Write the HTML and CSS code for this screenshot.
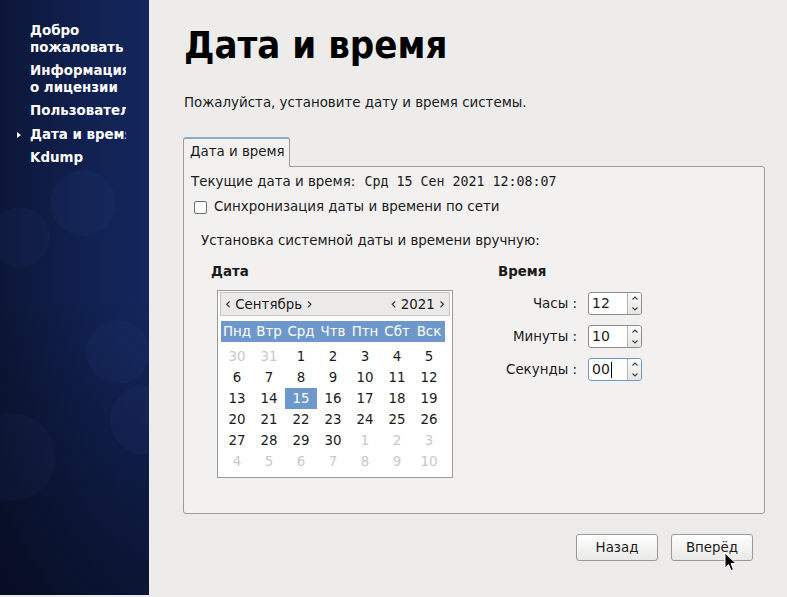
FILE: index.html
```html
<!DOCTYPE html>
<html lang="ru">
<head>
<meta charset="utf-8">
<title>Дата и время</title>
<link rel="stylesheet" href="styles.css">
</head>
<body>
<aside class="sidebar">
  <ul class="steps">
    <li>Добро<br>пожаловать</li>
    <li>Информация<br>о лицензии</li>
    <li>Пользователь</li>
    <li class="current"><span class="clip">Дата и время</span></li>
    <li>Kdump</li>
  </ul>
</aside>
<main class="main">
  <h1 class="title">Дата и время</h1>
  <p class="intro">Пожалуйста, установите дату и время системы.</p>
  <div class="tabs">
    <div class="tab">Дата и время</div>
  </div>
  <section class="frame">
    <div class="current-time">Текущие дата и время: <span class="mono">Срд 15 Сен 2021 12:08:07</span></div>
    <label class="sync"><span class="checkbox"></span>Синхронизация даты и времени по сети</label>
    <div class="manual">Установка системной даты и времени вручную:</div>
    <div class="columns">
      <div class="date-col">
        <div class="col-head">Дата</div>
        <div class="calendar">
          <div class="cal-head">
            <span class="nav"><span class="arr">‹</span> Сентябрь <span class="arr">›</span></span>
            <span class="nav"><span class="arr">‹</span> 2021 <span class="arr">›</span></span>
          </div>
          <div class="cal-grid">
            <div class="dn">Пнд</div><div class="dn">Втр</div><div class="dn">Срд</div><div class="dn">Чтв</div><div class="dn">Птн</div><div class="dn">Сбт</div><div class="dn">Вск</div>
            <div class="d off">30</div><div class="d off">31</div><div class="d">1</div><div class="d">2</div><div class="d">3</div><div class="d">4</div><div class="d">5</div>
            <div class="d">6</div><div class="d">7</div><div class="d">8</div><div class="d">9</div><div class="d">10</div><div class="d">11</div><div class="d">12</div>
            <div class="d">13</div><div class="d">14</div><div class="d sel">15</div><div class="d">16</div><div class="d">17</div><div class="d">18</div><div class="d">19</div>
            <div class="d">20</div><div class="d">21</div><div class="d">22</div><div class="d">23</div><div class="d">24</div><div class="d">25</div><div class="d">26</div>
            <div class="d">27</div><div class="d">28</div><div class="d">29</div><div class="d">30</div><div class="d off">1</div><div class="d off">2</div><div class="d off">3</div>
            <div class="d off">4</div><div class="d off">5</div><div class="d off">6</div><div class="d off">7</div><div class="d off">8</div><div class="d off">9</div><div class="d off">10</div>
          </div>
        </div>
      </div>
      <div class="time-col">
        <div class="col-head">Время</div>
        <div class="time-grid">
          <span class="tlabel">Часы :</span>
          <div class="spin"><span class="field">12</span><span class="btns"><svg viewBox="0 0 12 10" width="12" height="10"><path d="M3.5 6.5 L6 4 L8.5 6.5" fill="none" stroke="#444" stroke-width="1.2"/></svg><svg viewBox="0 0 12 10" width="12" height="10"><path d="M3.5 3.5 L6 6 L8.5 3.5" fill="none" stroke="#444" stroke-width="1.2"/></svg></span></div>
          <span class="tlabel">Минуты :</span>
          <div class="spin"><span class="field">10</span><span class="btns"><svg viewBox="0 0 12 10" width="12" height="10"><path d="M3.5 6.5 L6 4 L8.5 6.5" fill="none" stroke="#444" stroke-width="1.2"/></svg><svg viewBox="0 0 12 10" width="12" height="10"><path d="M3.5 3.5 L6 6 L8.5 3.5" fill="none" stroke="#444" stroke-width="1.2"/></svg></span></div>
          <span class="tlabel">Секунды :</span>
          <div class="spin focus"><span class="field">00<span class="caret"></span></span><span class="btns"><svg viewBox="0 0 12 10" width="12" height="10"><path d="M3.5 6.5 L6 4 L8.5 6.5" fill="none" stroke="#444" stroke-width="1.2"/></svg><svg viewBox="0 0 12 10" width="12" height="10"><path d="M3.5 3.5 L6 6 L8.5 3.5" fill="none" stroke="#444" stroke-width="1.2"/></svg></span></div>
        </div>
      </div>
    </div>
  </section>
  <div class="actions">
    <button class="btn">Назад</button>
    <button class="btn">Вперёд</button>
  </div>
  <svg class="cursor" width="13" height="20" viewBox="0 0 13 20"><path d="M1 1 L1 16 L4.5 12.5 L7 18.5 L9.5 17.5 L7 11.5 L12 11.5 Z" fill="#000" stroke="#fff" stroke-width="1"/></svg>
</main>
</body>
</html>
```

FILE: styles.css
```css
html, body {
  margin: 0;
  padding: 0;
}
body {
  width: 787px;
  height: 597px;
  display: flex;
  background: #edeceb;
  font-family: "DejaVu Sans", sans-serif;
  font-size: 13.4px;
  color: #1a1a1a;
  overflow: hidden;
}
.sidebar {
  width: 149px;
  flex: none;
  height: 595px;
  background:
    radial-gradient(circle at 83px 203px, rgba(70,100,180,0.06) 0 32px, transparent 33px),
    radial-gradient(circle at 20px 237px, rgba(70,100,180,0.05) 0 29px, transparent 30px),
    radial-gradient(circle at 118px 352px, rgba(70,100,180,0.06) 0 31px, transparent 32px),
    radial-gradient(circle at 145px 420px, rgba(70,100,180,0.06) 0 34px, transparent 35px),
    radial-gradient(circle at 12px 457px, rgba(70,100,180,0.05) 0 43px, transparent 44px),
    linear-gradient(to bottom, rgba(0,0,0,0) 50%, rgba(3,6,18,0.55) 100%),
    linear-gradient(to right, #0c1637 0%, #112151 60%, #14265d 100%);
}
.steps {
  list-style: none;
  margin: 0;
  padding: 23px 0 0 30px;
}
.steps li {
  color: #fff;
  font-weight: bold;
  font-size: 13.4px;
  line-height: 16.5px;
  margin-bottom: 7px;
  white-space: nowrap;
  width: 96px;
  overflow: hidden;
}
.steps li.current {
  position: relative;
  overflow: visible;
}
.steps li.current .clip {
  display: block;
  overflow: hidden;
}
.steps li.current::before {
  content: "";
  position: absolute;
  left: -13px;
  top: 5px;
  border-left: 4px solid #fff;
  border-top: 3px solid transparent;
  border-bottom: 3px solid transparent;
}

.main {
  flex: 1;
  padding: 0 22px 0 34px;
  position: relative;
}
.title {
  margin: 20px 0 0 1px;
  font-family: "DejaVu Sans Condensed", "DejaVu Sans", sans-serif;
  font-stretch: condensed;
  font-size: 38px;
  font-weight: bold;
  line-height: 50px;
  color: #000;
}
.intro {
  margin: 25px 0 0 1px;
  line-height: 16px;
}
.tabs {
  margin-top: 26px;
  display: flex;
  height: 29px;
}
.tab {
  width: 107px;
  box-sizing: border-box;
  border: 1px solid #9d9d9b;
  border-top: 2px solid #8fa9cc;
  border-bottom: none;
  border-radius: 3px 3px 0 0;
  background: #f2f1f0;
  padding: 5px 0 0 6px;
  position: relative;
  z-index: 1;
  margin-bottom: -1px;
  height: 30px;
}
.frame {
  height: 348px;
  box-sizing: border-box;
  border: 1px solid #9d9d9b;
  border-radius: 0 3px 3px 3px;
  background: #f2f1f0;
  padding: 7px 0 0 7px;
}
.current-time {
  line-height: 16px;
}
.mono {
  font-family: "DejaVu Sans Mono", monospace;
  font-size: 13.3px;
  margin-left: 5px;
}
.sync {
  display: flex;
  align-items: center;
  margin-top: 9px;
  margin-left: 3px;
  line-height: 16px;
}
.checkbox {
  width: 11px;
  height: 11px;
  border: 1px solid #6e6e6e;
  border-radius: 2px;
  background: #fff;
  margin-right: 7px;
}
.manual {
  margin: 18px 0 0 10px;
  line-height: 16px;
}
.columns {
  display: flex;
  margin-top: 15px;
  margin-left: 20px;
}
.col-head {
  font-weight: bold;
  line-height: 16px;
}
.date-col {
  width: 287px;
}
.calendar {
  margin: 10px 0 0 6px;
  width: 236px;
  height: 188px;
  box-sizing: border-box;
  border: 1px solid #9a9a9a;
  background: #fff;
  padding: 1px 2px;
}
.cal-head {
  height: 24px;
  box-sizing: border-box;
  border: 1px solid #c4c4c2;
  background: #ebeae9;
  display: flex;
  justify-content: space-between;
  align-items: center;
  padding: 0 4px;
  font-size: 13.4px;
}
.arr {
  font-size: 15px;
}
.cal-grid {
  margin: 5px 0 0 1px;
  display: grid;
  grid-template-columns: repeat(7, 32px);
  grid-template-rows: 25px;
  grid-auto-rows: 21px;
}
.dn {
  background: #6e98cc;
  color: #fff;
  text-align: center;
  line-height: 21px;
  height: 21px;
}
.d {
  text-align: center;
  line-height: 21px;
  color: #1a1a1a;
}
.d.off { color: #c8c8c8; }
.d.sel { background: #6e98cc; color: #fff; }

.time-col {
  flex: 1;
}
.time-grid {
  display: grid;
  grid-template-columns: 79px 54px;
  column-gap: 11px;
  row-gap: 10px;
  margin-top: 12px;
  align-items: center;
}
.tlabel {
  text-align: right;
  line-height: 16px;
}
.spin {
  height: 23px;
  box-sizing: border-box;
  border: 1px solid #8e8e8c;
  border-radius: 3px;
  background: #fff;
  display: flex;
  overflow: hidden;
}
.spin.focus {
  border-color: #6e98cc;
}
.field {
  flex: 1;
  padding-left: 3px;
  line-height: 21px;
  font-size: 14px;
  display: flex;
  align-items: center;
}
.caret {
  width: 1px;
  height: 16px;
  background: #000;
  margin-left: 1px;
}
.btns {
  width: 13px;
  border-left: 1px solid #b5b5b3;
  background: linear-gradient(#fafafa, #e6e6e5);
  display: flex;
  flex-direction: column;
  justify-content: space-around;
  align-items: center;
}
.btns svg {
  display: block;
}
.actions {
  display: flex;
  justify-content: flex-end;
  gap: 13px;
  margin-top: 20px;
  padding-right: 12px;
}
.btn {
  width: 82px;
  height: 27px;
  border: 1px solid #9a9a98;
  border-radius: 3px;
  background: linear-gradient(#ffffff, #e9e9e8);
  font-family: "DejaVu Sans", sans-serif;
  font-size: 13.4px;
  color: #1a1a1a;
  padding: 0;
}
.cursor {
  position: absolute;
  left: 575px;
  top: 552px;
}
```
